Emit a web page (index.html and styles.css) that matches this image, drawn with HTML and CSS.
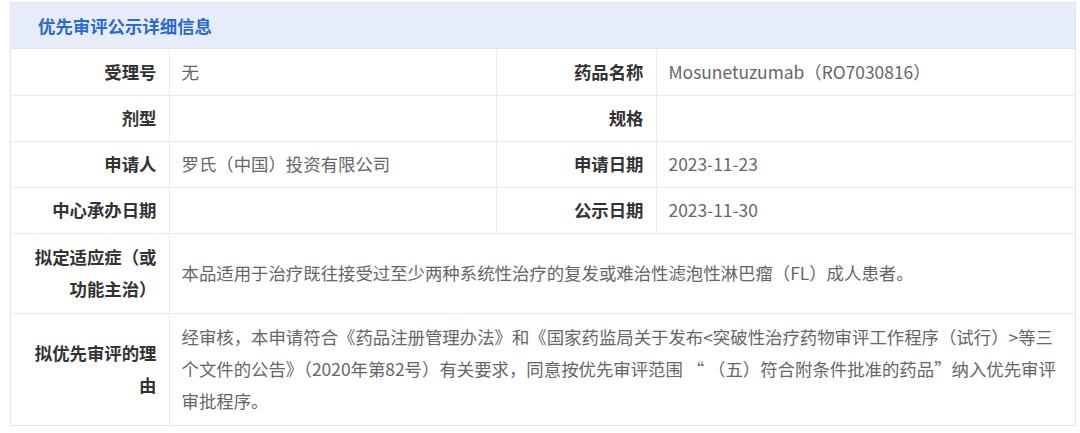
FILE: index.html
```html
<!DOCTYPE html>
<html lang="zh-CN">
<head>
<meta charset="utf-8">
<title>优先审评公示详细信息</title>
<link rel="stylesheet" href="styles.css">
</head>
<body>
<div class="panel">
  <div class="panel-head">优先审评公示详细信息</div>
  <table class="detail">
    <colgroup>
      <col class="c-label">
      <col class="c-value">
      <col class="c-label2">
      <col class="c-value2">
    </colgroup>
    <tr>
      <th>受理号</th><td>无</td>
      <th>药品名称</th><td>Mosunetuzumab（RO7030816）</td>
    </tr>
    <tr>
      <th>剂型</th><td></td>
      <th>规格</th><td></td>
    </tr>
    <tr>
      <th>申请人</th><td>罗氏（中国）投资有限公司</td>
      <th>申请日期</th><td>2023-11-23</td>
    </tr>
    <tr>
      <th>中心承办日期</th><td></td>
      <th>公示日期</th><td>2023-11-30</td>
    </tr>
    <tr class="multi two">
      <th>拟定适应症（或功能主治）</th>
      <td colspan="3">本品适用于治疗既往接受过至少两种系统性治疗的复发或难治性滤泡性淋巴瘤（FL）成人患者。</td>
    </tr>
    <tr class="multi three">
      <th>拟优先审评的理由</th>
      <td colspan="3">经审核，本申请符合《药品注册管理办法》和《国家药监局关于发布&lt;突破性治疗药物审评工作程序（试行）&gt;等三个文件的公告》（2020年第82号）有关要求，同意按优先审评范围&nbsp;“&nbsp;（五）符合附条件批准的药品”纳入优先审评审批程序。</td>
    </tr>
  </table>
</div>
</body>
</html>
```
FILE: styles.css
```css
html, body {
  margin: 0;
  padding: 0;
  background: #ffffff;
}
body {
  font-family: "Microsoft YaHei", "Noto Sans CJK SC", "Noto Sans", sans-serif;
  padding: 2px 0 0 10px;
}
.panel {
  width: 1066px;
  border: 1px solid #e6e6e6;
  box-sizing: border-box;
}
.panel-head {
  height: 45px;
  background: #e6edf9;
  color: #2a6ad3;
  font-size: 17.4px;
  font-weight: bold;
  line-height: 45px;
  padding-left: 27px;
  border-bottom: 1px solid #e6e6e6;
}
.detail {
  width: 100%;
  border-collapse: collapse;
  table-layout: fixed;
  font-size: 17.4px;
}
.c-label { width: 158px; }
.c-value { width: 327px; }
.c-label2 { width: 160px; }
.detail tr { height: 46px; }
.detail tr.two { height: 80px; }
.detail tr.three { height: 112px; }
.detail th,
.detail td {
  border: 1px solid #ebebeb;
  padding: 0 12px;
  line-height: 32px;
  vertical-align: middle;
}
.detail tr:first-child th,
.detail tr:first-child td { border-top: none; }
.detail tr:last-child th,
.detail tr:last-child td { border-bottom: none; }
.detail tr th:first-child { border-left: none; }
.detail tr td:last-child { border-right: none; }
.detail th {
  text-align: right;
  color: #333333;
  font-weight: bold;
}
.detail td {
  text-align: left;
  color: #666666;
  font-weight: normal;
}
```
